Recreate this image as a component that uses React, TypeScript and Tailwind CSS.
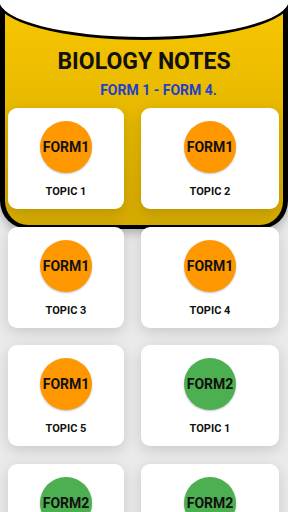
import React from 'react';

type Topic = {
  form: string;
  topic: string;
  color: string;
};

const topics: Topic[] = [
  { form: 'FORM1', topic: 'TOPIC 1', color: 'bg-[#ff9800]' },
  { form: 'FORM1', topic: 'TOPIC 2', color: 'bg-[#ff9800]' },
  { form: 'FORM1', topic: 'TOPIC 3', color: 'bg-[#ff9800]' },
  { form: 'FORM1', topic: 'TOPIC 4', color: 'bg-[#ff9800]' },
  { form: 'FORM1', topic: 'TOPIC 5', color: 'bg-[#ff9800]' },
  { form: 'FORM2', topic: 'TOPIC 1', color: 'bg-[#4caf50]' },
  { form: 'FORM2', topic: 'TOPIC 2', color: 'bg-[#4caf50]' },
  { form: 'FORM2', topic: 'TOPIC 3', color: 'bg-[#4caf50]' },
];

function TopicCard({ item }: { item: Topic }) {
  return (
    <div className="h-[101px] bg-white rounded-[9px] shadow-[0_4px_14px_rgba(0,0,0,0.14)] flex flex-col items-center pt-[13px]">
      <div
        className={`w-[52px] h-[52px] rounded-full ${item.color} flex items-center justify-center shadow-[0_1px_2px_rgba(0,0,0,0.25)]`}
      >
        <span className="text-[14px] leading-none font-bold text-[#111]">
          {item.form}
        </span>
      </div>
      <p className="mt-[12px] text-[11px] leading-[13px] font-bold text-[#111]">
        {item.topic}
      </p>
    </div>
  );
}

export default function App() {
  return (
    <div
      className="relative min-h-[512px] h-[512px] overflow-hidden bg-[#eaeaea]"
      style={{ fontFamily: 'Roboto, "Liberation Sans", sans-serif' }}
    >
      {/* yellow cup background */}
      <div className="absolute top-0 left-0 right-0 h-[229px] bg-gradient-to-b from-[#f8c700] to-[#d5aa00] border-x-[5px] border-b-[4px] border-black rounded-b-[28px] shadow-[0_4px_10px_rgba(0,0,0,0.25)]" />
      <div className="absolute top-[-40px] left-[-4px] w-[296px] h-[80px] bg-white border-[3px] border-black rounded-[50%]" />

      <div className="relative pt-[48px]">
        <h1 className="text-center text-[23px] leading-[28px] font-bold text-[#111]">
          BIOLOGY NOTES
        </h1>
        <p className="mt-[6px] pl-[29px] text-center text-[14px] leading-[16px] font-bold text-[#1f3fcc]">
          FORM 1 - FORM 4.
        </p>

        <div className="mt-[10px] pl-[8px] grid grid-cols-[116px_138px] gap-x-[17px] gap-y-[17.5px]">
          {topics.map((item, i) => (
            <TopicCard key={i} item={item} />
          ))}
        </div>
      </div>
    </div>
  );
}
